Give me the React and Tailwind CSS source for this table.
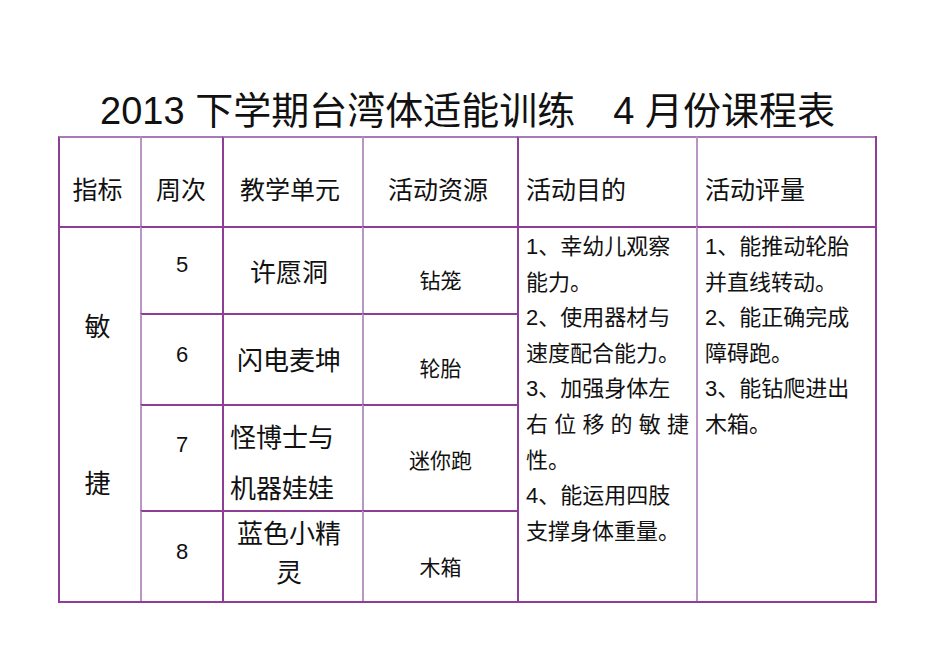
import React from "react";

const font = { fontFamily: '"Liberation Sans", "Noto Sans CJK SC", sans-serif' };

const goals = [
  "1、幸幼儿观察",
  "能力。",
  "2、使用器材与",
  "速度配合能力。",
  "3、加强身体左",
  "JUSTIFY",
  "性。",
  "4、能运用四肢",
  "支撑身体重量。",
];

const checks = [
  "1、能推动轮胎",
  "并直线转动。",
  "2、能正确完成",
  "障碍跑。",
  "3、能钻爬进出",
  "木箱。",
];

const Line = ({ text }) => {
  if (text === "JUSTIFY") {
    return (
      <div className="flex justify-between w-[163px] h-[35.6px] leading-[35.6px]">
        {["右", "位", "移", "的", "敏", "捷"].map((c) => (
          <span key={c}>{c}</span>
        ))}
      </div>
    );
  }
  const [num, rest] = text.includes("、") ? text.split("、") : [null, text];
  return (
    <div className="h-[35.6px] leading-[35.6px] whitespace-nowrap">
      {num ? (
        <>
          <span className="text-[22px]">{num}</span>
          <span>、</span>
        </>
      ) : null}
      {rest}
    </div>
  );
};

export default function App() {
  return (
    <div className="w-[950px] h-[672px] bg-white text-[#111]" style={font}>
      {/* title */}
      <div className="ml-[58px] w-[819px] pt-[92px] h-[136px] text-center text-[38px] leading-[38px] whitespace-nowrap">
        2013 下学期台湾体适能训练　4 月份课程表
      </div>

      {/* table */}
      <div className="ml-[58px] w-[819px] grid grid-cols-[82px_82px_140px_155px_179px_179px] grid-rows-[90px_87px_91px_106px_91px] border-r-2 border-b-2 border-r-[#8e3e97] border-b-[#8e3e97]">
        {/* header */}
        <div className="border-l-2 border-t-2 border-l-[#8e3e97] border-t-[#a77cb6] flex items-center justify-center pt-[18px] pr-[5px] text-[25px]">
          指标
        </div>
        <div className="border-l-2 border-t-2 border-l-[#b996c3] border-t-[#a77cb6] flex items-center justify-center pt-[18px] pr-[2px] text-[25px]">
          周次
        </div>
        <div className="border-l-2 border-t-2 border-l-[#8e3e97] border-t-[#a77cb6] flex items-center justify-center pt-[18px] pr-[6px] text-[25px]">
          教学单元
        </div>
        <div className="border-l-2 border-t-2 border-l-[#b996c3] border-t-[#a77cb6] flex items-center justify-center pt-[18px] pr-[5px] text-[25px]">
          活动资源
        </div>
        <div className="border-l-2 border-t-2 border-l-[#8e3e97] border-t-[#a77cb6] flex items-center pl-[7px] pt-[18px] text-[25px]">
          活动目的
        </div>
        <div className="border-l-2 border-t-2 border-l-[#b996c3] border-t-[#a77cb6] flex items-center pl-[7px] pt-[18px] text-[25px]">
          活动评量
        </div>

        {/* indicator column */}
        <div className="row-span-4 border-l-2 border-t-2 border-l-[#8e3e97] border-t-[#8e3e97] flex flex-col items-center pt-[86px] pr-[5px] text-[26px] leading-[26px]">
          <span>敏</span>
          <span className="mt-[131px]">捷</span>
        </div>

        {/* week 5 */}
        <div className="border-l-2 border-t-2 border-l-[#b996c3] border-t-[#8e3e97] flex items-center justify-center pb-[13px] text-[22px]">
          5
        </div>
        <div className="border-l-2 border-t-2 border-l-[#8e3e97] border-t-[#8e3e97] flex items-center justify-center pt-[5px] pr-[8px] text-[26px]">
          许愿洞
        </div>
        <div className="border-l-2 border-t-2 border-l-[#b996c3] border-t-[#8e3e97] flex items-center justify-center pt-[21px] text-[21px]">
          钻笼
        </div>

        {/* goals */}
        <div className="row-span-4 border-l-2 border-t-2 border-l-[#8e3e97] border-t-[#8e3e97] pl-[7px] pt-[1px] text-[22px]">
          {goals.map((g, i) => (
            <Line key={i} text={g} />
          ))}
        </div>

        {/* checks */}
        <div className="row-span-4 border-l-2 border-t-2 border-l-[#b996c3] border-t-[#8e3e97] pl-[7px] pt-[1px] text-[22px]">
          {checks.map((g, i) => (
            <Line key={i} text={g} />
          ))}
        </div>

        {/* week 6 */}
        <div className="border-l-2 border-t-2 border-l-[#b996c3] border-t-[#8e3e97] flex items-center justify-center pb-[11px] text-[22px]">
          6
        </div>
        <div className="border-l-2 border-t-2 border-l-[#8e3e97] border-t-[#8e3e97] flex items-center justify-center pt-[3px] pr-[8px] text-[26px]">
          闪电麦坤
        </div>
        <div className="border-l-2 border-t-2 border-l-[#b996c3] border-t-[#8e3e97] flex items-center justify-center pt-[19px] text-[21px]">
          轮胎
        </div>

        {/* week 7 */}
        <div className="border-l-2 border-t-2 border-l-[#b996c3] border-t-[#8e3e97] flex items-center justify-center pb-[28px] text-[22px]">
          7
        </div>
        <div className="border-l-2 border-t-2 border-l-[#8e3e97] border-t-[#8e3e97] flex flex-col justify-center pl-[6px] pt-[11px] text-[26px] leading-[51px]">
          <span>怪博士与</span>
          <span>机器娃娃</span>
        </div>
        <div className="border-l-2 border-t-2 border-l-[#b996c3] border-t-[#8e3e97] flex items-center justify-center pt-[6px] text-[21px]">
          迷你跑
        </div>

        {/* week 8 */}
        <div className="border-l-2 border-t-2 border-l-[#b996c3] border-t-[#8e3e97] flex items-center justify-center pb-[11px] text-[22px]">
          8
        </div>
        <div className="border-l-2 border-t-2 border-l-[#8e3e97] border-t-[#8e3e97] flex flex-col items-center justify-center pb-[6px] pr-[8px] text-[26px] leading-[39px]">
          <span>蓝色小精</span>
          <span>灵</span>
        </div>
        <div className="border-l-2 border-t-2 border-l-[#b996c3] border-t-[#8e3e97] flex items-center justify-center pt-[23px] text-[21px]">
          木箱
        </div>
      </div>
    </div>
  );
}
